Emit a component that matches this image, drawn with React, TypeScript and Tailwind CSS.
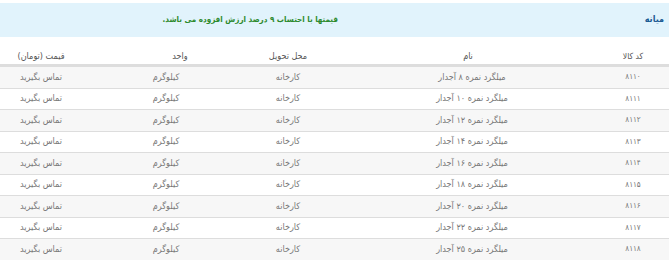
const rows = [
  { code: "۸۱۱۰", name: "میلگرد نمره ۸ آجدار" },
  { code: "۸۱۱۱", name: "میلگرد نمره ۱۰ آجدار" },
  { code: "۸۱۱۲", name: "میلگرد نمره ۱۲ آجدار" },
  { code: "۸۱۱۳", name: "میلگرد نمره ۱۴ آجدار" },
  { code: "۸۱۱۴", name: "میلگرد نمره ۱۶ آجدار" },
  { code: "۸۱۱۵", name: "میلگرد نمره ۱۸ آجدار" },
  { code: "۸۱۱۶", name: "میلگرد نمره ۲۰ آجدار" },
  { code: "۸۱۱۷", name: "میلگرد نمره ۲۲ آجدار" },
  { code: "۸۱۱۸", name: "میلگرد نمره ۲۵ آجدار" },
];

// ستون ها از راست به چپ
const cols = "grid grid-cols-[72px_254px_110px_116px_117px]";

export default function App() {
  return (
    <div
      dir="rtl"
      className="w-[669px] h-[269px] bg-white pt-[3px] text-[9px] overflow-hidden"
      style={{ fontFamily: '"DejaVu Sans Condensed", "DejaVu Sans", sans-serif' }}
    >
      <div className="flex h-[34px] items-center justify-between bg-[#e1f3fc] pr-[5px]">
        <h2 className="text-[9px] font-bold text-[#1b5a93]">میانه</h2>
        <p className="w-[338px] text-[8px] font-bold text-[#2d8a2d]">
          قیمتها با احتساب ۹ درصد ارزش افزوده می باشد.
        </p>
      </div>

      <div className="mt-[7px]">
        <div
          className={`${cols} h-[22px] items-center whitespace-nowrap border-b-2 border-[#dddddd] pt-[5px] text-center text-[#555555]`}
        >
          <div className="text-[8.5px]">کد کالا</div>
          <div className="pr-[4px]">نام</div>
          <div>محل تحویل</div>
          <div className="pl-[10px]">واحد</div>
          <div className="pr-[35px]">قیمت (تومان)</div>
        </div>

        {rows.map((row, i) => (
          <div
            key={row.code}
            className={`${cols} h-[21.5px] items-center whitespace-nowrap border-t border-[#dddddd] text-center text-[#777777] first:border-t-0 ${
              i % 2 === 0 ? "bg-[#f7f7f7]" : "bg-white"
            }`}
          >
            <div className="text-[8px]">{row.code}</div>
            <div className="pl-[4px]">{row.name}</div>
            <div>کارخانه</div>
            <div className="pr-[18px]">کیلوگرم</div>
            <div className="pr-[35px]">تماس بگیرید</div>
          </div>
        ))}
      </div>
    </div>
  );
}
